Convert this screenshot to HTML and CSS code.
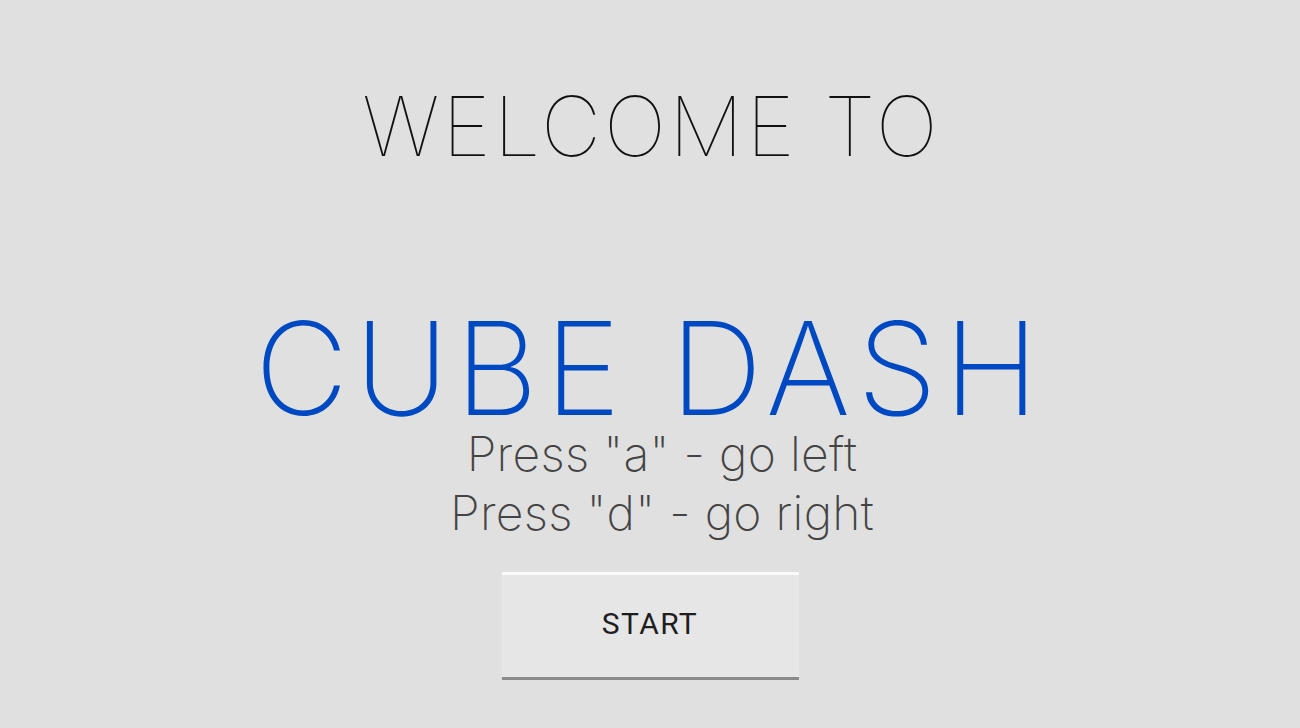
FILE: index.html
```html
<!DOCTYPE html>
<html>
<head>
<meta charset="utf-8">
<link rel="stylesheet" href="styles.css">
</head>
<body>
<main class="screen">
  <h2 class="welcome">WELCOME TO</h2>
  <h1 class="title">CUBE DASH</h1>
  <p class="help">Press "a" - go left<br>Press "d" - go right</p>
  <button class="start">START</button>
</main>
</body>
</html>
```
FILE: styles.css
```css
html, body {
  margin: 0;
  padding: 0;
  background: #e0e0e0;
  height: 100%;
}
.screen {
  display: flex;
  flex-direction: column;
  align-items: center;
  font-family: "Inter", "Lato", sans-serif;
}
.welcome {
  margin: 72px 0 0 0;
  font-size: 83px;
  font-weight: 100;
  line-height: 108px;
  color: #111;
  letter-spacing: 3px;
  text-indent: 3px;
}
.title {
  margin: 129px 0 0 0;
  font-size: 129px;
  font-weight: 200;
  line-height: 118px;
  color: #0049c2;
  letter-spacing: 6.5px;
}
.help {
  margin: -3px 0 0 0;
  padding-left: 24px;
  font-size: 48px;
  font-weight: 200;
  line-height: 59px;
  color: #444;
  text-align: center;
  letter-spacing: 0.3px;
}
.start {
  margin-top: 30px;
  width: 297px;
  height: 108px;
  background: #e6e6e6;
  border: none;
  border-top: 3px solid #fafafa;
  border-bottom: 3px solid #8a8a8a;
  font-family: "Roboto", sans-serif;
  font-size: 30px;
  color: #1e1e1e;
  letter-spacing: 1.4px;
  padding: 0 0 6px 0;
}
```
